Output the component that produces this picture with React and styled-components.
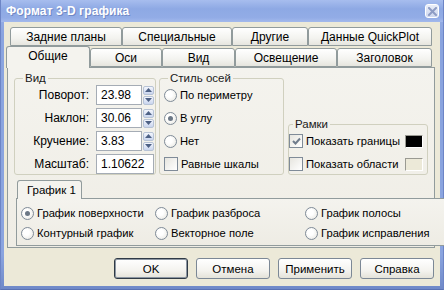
import React from 'react';
import styled, { createGlobalStyle } from 'styled-components';

const GlobalStyle = createGlobalStyle`
  html, body {
    margin: 0;
    padding: 0;
  }
  body {
    width: 444px;
    height: 290px;
    overflow: hidden;
    font-family: "Liberation Sans", Arial, sans-serif;
    font-size: 11px;
    color: #000;
  }
  * {
    box-sizing: border-box;
  }
`;

const topTabs = [
  { label: 'Задние планы', width: 112 },
  { label: 'Специальные', width: 110 },
  { label: 'Другие', width: 76 },
  { label: 'Данные QuickPlot', width: 124 },
];

const frontTabs = [
  { label: 'Общие', width: 84, active: true },
  { label: 'Оси', width: 72 },
  { label: 'Вид', width: 73 },
  { label: 'Освещение', width: 102 },
  { label: 'Заголовок', width: 95 },
];

const viewRows = [
  { label: 'Поворот:', value: '23.98', spin: true },
  { label: 'Наклон:', value: '30.06', spin: true },
  { label: 'Кручение:', value: '3.83', spin: true },
  { label: 'Масштаб:', value: '1.10622' },
];

const plotTypes = [
  { label: 'График поверхности', checked: true },
  { label: 'График разброса' },
  { label: 'График полосы' },
  { label: 'Контурный график' },
  { label: 'Векторное поле' },
  { label: 'График исправления' },
];

const buttons = ['OK', 'Отмена', 'Применить', 'Справка'];

const App = () => {
  return (
    <>
      <GlobalStyle />
      <Window>
        <TitleBar>
          <Title>Формат 3-D графика</Title>
          <CloseButton>
            <svg width="9" height="9" viewBox="0 0 9 9">
              <path d="M1 1 L8 8 M8 1 L1 8" stroke="#8e9cc4" strokeWidth="2" strokeLinecap="square" />
            </svg>
          </CloseButton>
        </TitleBar>
        <Body>
          <TabRow offset={4}>
            {topTabs.map((t) => (
              <Tab key={t.label} style={{ width: t.width }}>
                {t.label}
              </Tab>
            ))}
          </TabRow>
          <TabRow offset={0}>
            {frontTabs.map((t) => (
              <Tab key={t.label} active={t.active} style={{ width: t.width }}>
                {t.label}
              </Tab>
            ))}
          </TabRow>
          <Panel>
            <GroupsRow>
              <Group width={142}>
                <Legend>Вид</Legend>
                <FieldGrid>
                  {viewRows.map((r) => (
                    <FieldRow key={r.label}>
                      <FieldLabel>{r.label}</FieldLabel>
                      <InputBox wide={!r.spin}>{r.value}</InputBox>
                      {r.spin && (
                        <Spinner>
                          <SpinHalf>
                            <svg width="7" height="4" viewBox="0 0 7 4">
                              <path d="M0 4 L3.5 0 L7 4 Z" fill="#4d6185" />
                            </svg>
                          </SpinHalf>
                          <SpinHalf>
                            <svg width="7" height="4" viewBox="0 0 7 4">
                              <path d="M0 0 L3.5 4 L7 0 Z" fill="#4d6185" />
                            </svg>
                          </SpinHalf>
                        </Spinner>
                      )}
                    </FieldRow>
                  ))}
                </FieldGrid>
              </Group>
              <Group width={125} gapLeft={3}>
                <Legend>Стиль осей</Legend>
                <FieldGrid>
                  <Choice>
                    <Radio />
                    По периметру
                  </Choice>
                  <Choice>
                    <Radio checked />
                    В углу
                  </Choice>
                  <Choice>
                    <Radio />
                    Нет
                  </Choice>
                  <Choice>
                    <Check />
                    Равные шкалы
                  </Choice>
                </FieldGrid>
              </Group>
              <FrameGroup>
                <Legend>Рамки</Legend>
                <FieldGrid>
                  <FrameRow>
                    <Choice>
                      <Check checked>
                        <svg width="11" height="11" viewBox="0 0 11 11">
                          <path d="M2 5 L4.5 7.5 L9 2.5" fill="none" stroke="#6f7c8c" strokeWidth="2" />
                        </svg>
                      </Check>
                      Показать границы
                    </Choice>
                    <Swatch color="#000" />
                  </FrameRow>
                  <FrameRow>
                    <Choice>
                      <Check />
                      Показать области
                    </Choice>
                    <Swatch />
                  </FrameRow>
                </FieldGrid>
              </FrameGroup>
            </GroupsRow>
            <SubTabs>
              <SubTab>График 1</SubTab>
              <SubPanel>
                {plotTypes.map((p) => (
                  <Choice key={p.label}>
                    <Radio checked={p.checked} />
                    {p.label}
                  </Choice>
                ))}
              </SubPanel>
            </SubTabs>
          </Panel>
          <ButtonRow>
            {buttons.map((b, i) => (
              <Button key={b} isDefault={i === 0}>
                {b}
              </Button>
            ))}
          </ButtonRow>
        </Body>
      </Window>
    </>
  );
};

export default App;

const Window = styled.div`
  width: 444px;
  height: 290px;
  display: flex;
  flex-direction: column;
  background: linear-gradient(#9cb3e8, #8aa4df 12%, #8aa4df 88%, #6f89c8);
  padding: 0 3px 3px 3px;
  border-left: 1px solid #6d85c6;
  border-right: 1px solid #6d85c6;
  border-bottom: 1px solid #5a72b3;
`;

const TitleBar = styled.div`
  height: 22px;
  flex: none;
  display: flex;
  align-items: center;
  justify-content: space-between;
  margin: 0 -3px;
  padding-left: 5px;
  padding-right: 4px;
  background: linear-gradient(#a7bdee, #8ea9e4 40%, #92ace6 80%, #a3b9ec);
`;

const Title = styled.span`
  color: #fff;
  font-weight: bold;
  font-size: 12px;
  letter-spacing: 0.1px;
  text-shadow: 1px 1px 0 #7088c4;
`;

const CloseButton = styled.span`
  width: 14px;
  height: 14px;
  border: 1px solid #fff;
  border-radius: 3px;
  background: linear-gradient(#e9edf8, #cfd8ef);
  display: flex;
  align-items: center;
  justify-content: center;
`;

const Body = styled.div`
  flex: 1;
  background: #ece9d8;
  padding: 5px 5px 0 2px;
  display: flex;
  flex-direction: column;
`;

const TabRow = styled.div`
  display: flex;
  align-items: flex-end;
  height: 19px;
  padding-left: ${(p) => p.offset}px;
  position: relative;
  z-index: 1;

  & + & {
    height: 21px;
    z-index: 2;
  }
`;

const Tab = styled.div`
  flex: none;
  height: ${(p) => (p.active ? '22px' : '19px')};
  margin-bottom: ${(p) => (p.active ? '-1px' : '0')};
  border: 1px solid #919b9c;
  border-bottom: ${(p) => (p.active ? 'none' : '1px solid #919b9c')};
  border-radius: 3px 3px 0 0;
  background: ${(p) =>
    p.active ? '#f4f3ee' : 'linear-gradient(#ffffff, #f3f3ef 60%, #e6e5de)'};
  display: flex;
  align-items: center;
  justify-content: center;
  padding-bottom: ${(p) => (p.active ? '3px' : '0')};
  font-size: 12px;
  white-space: nowrap;
  position: relative;
  z-index: ${(p) => (p.active ? 3 : 1)};
`;

const Panel = styled.div`
  width: 428px;
  margin-left: 1px;
  border: 1px solid #919b9c;
  background: linear-gradient(#f4f3ee, #efede5);
  padding: 3px 0 1px 6px;
  position: relative;
  z-index: 1;
`;

const GroupsRow = styled.div`
  display: flex;
  align-items: stretch;
`;

const Group = styled.fieldset`
  width: ${(p) => p.width}px;
  margin: 0 0 0 ${(p) => p.gapLeft || 0}px;
  padding: 0 1px 0 4px;
  border: 1px solid #d0d0bf;
  border-radius: 3px;
  min-width: 0;
`;

const FrameGroup = styled.fieldset`
  width: 140px;
  margin: 0 0 0 4px;
  align-self: flex-end;
  padding: 0 4px 0 0;
  border: 1px solid #d0d0bf;
  border-radius: 3px;
  min-width: 0;
`;

const Legend = styled.legend`
  padding: 0 2px;
  margin-left: 4px;
  line-height: 14px;
  font-size: 11.5px;
  color: #1a1a1a;
`;

const FieldGrid = styled.div`
  display: grid;
  grid-auto-rows: 20px;
  row-gap: 3px;
`;

const FieldRow = styled.div`
  display: flex;
  align-items: center;
`;

const FieldLabel = styled.span`
  width: 70px;
  text-align: right;
  margin-right: 7px;
  font-size: 12px;
  white-space: nowrap;
`;

const InputBox = styled.div`
  width: ${(p) => (p.wide ? '58px' : '46px')};
  height: 20px;
  border: 1px solid #a5acb5;
  background: #fff;
  padding: 0 4px;
  display: flex;
  align-items: center;
  font-size: 12px;
`;

const Spinner = styled.div`
  width: 11px;
  height: 20px;
  display: flex;
  flex-direction: column;
  justify-content: center;
  gap: 1px;
  margin-left: 1px;
`;

const SpinHalf = styled.div`
  height: 9px;
  border: 1px solid #b7c3d6;
  border-radius: 2px;
  background: linear-gradient(#f3f6fd, #c9d5ee);
  display: flex;
  align-items: center;
  justify-content: center;
`;

const Choice = styled.label`
  display: flex;
  align-items: center;
  gap: 3px;
  font-size: 11.2px;
  white-space: nowrap;
`;

const Radio = styled.span`
  width: 13px;
  height: 13px;
  flex: none;
  border-radius: 50%;
  border: 1px solid #7f8b98;
  background: radial-gradient(circle at 40% 40%, #ffffff 30%, #e4e3dc);
  display: flex;
  align-items: center;
  justify-content: center;

  &::after {
    content: '';
    width: 5px;
    height: 5px;
    border-radius: 50%;
    background: ${(p) => (p.checked ? '#6c7886' : 'transparent')};
  }
`;

const Check = styled.span`
  width: 14px;
  height: 14px;
  flex: none;
  border: 1px solid #7f8b98;
  background: linear-gradient(135deg, #e6e5df, #ffffff);
  display: flex;
  align-items: center;
  justify-content: center;
`;

const FrameRow = styled.div`
  display: flex;
  align-items: center;
  justify-content: space-between;
`;

const Swatch = styled.span`
  width: 18px;
  height: 13px;
  border: 1px solid;
  border-color: #9a9a92 #ffffff #ffffff #9a9a92;
  background: ${(p) => p.color || '#ece9d8'};
`;

const SubTabs = styled.div`
  margin: 5px -6px 0 2px;
  display: flex;
  flex-direction: column;
  align-items: flex-start;
`;

const SubTab = styled.div`
  width: 65px;
  height: 19px;
  margin-left: 1px;
  margin-bottom: -1px;
  border: 1px solid #919b9c;
  border-bottom: none;
  border-radius: 3px 3px 0 0;
  background: #f4f3ee;
  display: flex;
  align-items: center;
  padding-left: 9px;
  font-size: 11.5px;
  position: relative;
  z-index: 1;
`;

const SubPanel = styled.div`
  width: 430px;
  height: 48px;
  border: 1px solid #919b9c;
  background: linear-gradient(#f4f3ee, #eeece4);
  padding: 4px 4px 0 4px;
  display: grid;
  grid-template-columns: 134px 150px 1fr;
  grid-auto-rows: 20px;
`;

const ButtonRow = styled.div`
  display: flex;
  justify-content: flex-end;
  gap: 8px;
  margin-top: 10px;
  padding-right: 1px;
`;

const Button = styled.button`
  width: 74px;
  height: 21px;
  font-family: inherit;
  font-size: 11.5px;
  color: #000;
  border: 1px solid ${(p) => (p.isDefault ? '#2f3a46' : '#7c8896')};
  border-radius: 3px;
  background: linear-gradient(#ffffff, #f4f3ef 60%, #e4e2d9);
  box-shadow: ${(p) => (p.isDefault ? 'inset 0 0 0 1px #8c96a2' : 'none')};
  padding: 0;
`;
